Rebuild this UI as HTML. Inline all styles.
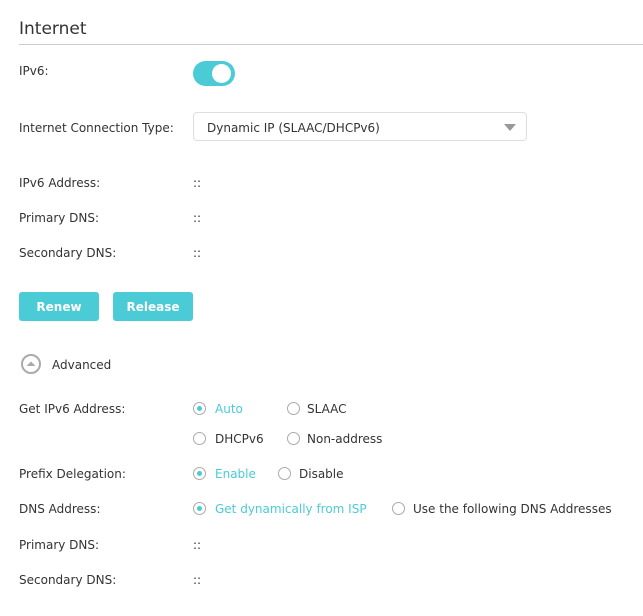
<!DOCTYPE html>
<html><head><style>
body{margin:0;width:643px;height:616px;background:#fff;font-family:"DejaVu Sans",Verdana,sans-serif;font-size:12px;color:#333;position:relative;overflow:hidden}
.a{position:absolute;white-space:nowrap;line-height:14px;margin-top:1px}
.t{position:absolute;left:19px;top:19px;font-size:17px;color:#333}
.hr{position:absolute;left:19px;right:0;top:44px;height:1px;background:#ccc}
.tog{position:absolute;left:193px;top:61px;width:42px;height:25px;border-radius:13px;background:#4acbd6}
.tog:after{content:"";position:absolute;right:4px;top:3px;width:19px;height:19px;border-radius:50%;background:#fff}
.sel{position:absolute;left:193px;top:112px;width:334px;height:29px;border:1px solid #ddd;border-radius:4px;box-sizing:border-box}
.sel span{position:absolute;left:13px;top:8px}
.arr{position:absolute;right:10px;top:11px;width:0;height:0;border-left:6px solid transparent;border-right:6px solid transparent;border-top:7px solid #999}
.btn{position:absolute;top:292px;width:80px;height:29px;background:#4acbd6;color:#fff;border-radius:3px;text-align:center;line-height:30px;font-weight:bold;font-size:12px}
.r{position:absolute;width:11px;height:11px;border:1px solid #aaa;border-radius:50%;box-sizing:content-box}
.r.on:after{content:"";position:absolute;left:3px;top:3px;width:5px;height:5px;border-radius:50%;background:#4acbd6}
.c{color:#4acbd6}
</style></head><body>
<div class="t">Internet</div><div class="hr"></div>
<div class="a" style="left:19px;top:63px">IPv6:</div><div class="tog"></div>
<div class="a" style="left:19px;top:120px">Internet Connection Type:</div>
<div class="sel"><span>Dynamic IP (SLAAC/DHCPv6)</span><div class="arr"></div></div>
<div class="a" style="left:19px;top:175px">IPv6 Address:</div><div class="a" style="left:193px;top:175px">::</div>
<div class="a" style="left:19px;top:210px">Primary DNS:</div><div class="a" style="left:193px;top:210px">::</div>
<div class="a" style="left:19px;top:245px">Secondary DNS:</div><div class="a" style="left:193px;top:245px">::</div>
<div class="btn" style="left:19px">Renew</div><div class="btn" style="left:113px">Release</div>
<svg style="position:absolute;left:20px;top:353px" width="22" height="22"><circle cx="11" cy="11" r="9" fill="none" stroke="#aaa" stroke-width="2"/><path d="M6.5 13 L11 8.5 L15.5 13 Z" fill="#aaa"/></svg>
<div class="a" style="left:52px;top:357px">Advanced</div>
<div class="a" style="left:19px;top:401px">Get IPv6 Address:</div>
<div class="r on" style="left:193px;top:402px"></div><div class="a c" style="left:215px;top:401px">Auto</div>
<div class="r" style="left:287px;top:402px"></div><div class="a" style="left:307px;top:401px">SLAAC</div>
<div class="r" style="left:193px;top:432px"></div><div class="a" style="left:215px;top:431px">DHCPv6</div>
<div class="r" style="left:287px;top:432px"></div><div class="a" style="left:307px;top:431px">Non-address</div>
<div class="a" style="left:19px;top:466px">Prefix Delegation:</div>
<div class="r on" style="left:193px;top:467px"></div><div class="a c" style="left:215px;top:466px">Enable</div>
<div class="r" style="left:278px;top:467px"></div><div class="a" style="left:299px;top:466px">Disable</div>
<div class="a" style="left:19px;top:501px">DNS Address:</div>
<div class="r on" style="left:193px;top:502px"></div><div class="a c" style="left:215px;top:501px">Get dynamically from ISP</div>
<div class="r" style="left:392px;top:502px"></div><div class="a" style="left:413px;top:501px">Use the following DNS Addresses</div>
<div class="a" style="left:19px;top:537px">Primary DNS:</div><div class="a" style="left:193px;top:537px">::</div>
<div class="a" style="left:19px;top:572px">Secondary DNS:</div><div class="a" style="left:193px;top:572px">::</div>
</body></html>
